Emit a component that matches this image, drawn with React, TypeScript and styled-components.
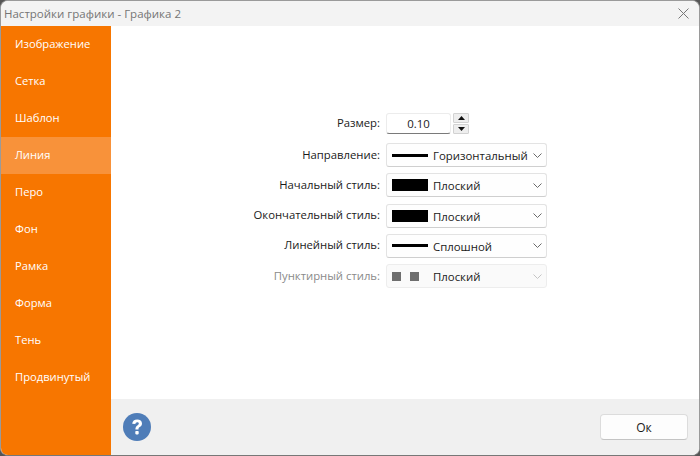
import React from "react";
import styled, { createGlobalStyle } from "styled-components";

const Global = createGlobalStyle`
  html, body { margin: 0; padding: 0; background: #555; overflow: hidden; }
  body { font-family: "Open Sans", "Noto Sans", sans-serif; }
`;

const Win = styled.div`
  width: 700px; height: 456px; box-sizing: border-box;
  display: flex; flex-direction: column; overflow: hidden;
  border: 1px solid #9a9a9a; border-bottom-color: #777; border-radius: 8px;
  background: #fff;
`;
const TitleBar = styled.div`
  height: 25px; box-sizing: border-box; flex: none; background: #f3f3f3; display: flex; align-items: center;
  justify-content: space-between; padding: 0 10px 1px 3px;
  font-size: 11.5px; color: #757575;
`;
const Body = styled.div`flex: 1; display: flex; min-height: 0;`;
const Side = styled.nav`width: 110px; flex: none; background: #f77600; display: flex; flex-direction: column;`;
const NavItem = styled.div<{ $active?: boolean }>`
  height: 37px; box-sizing: border-box; flex: none; display: flex; align-items: center; padding: 0 0 2px 14px;
  color: #fff; font-size: 11.2px; background: ${(p) => (p.$active ? "#f8923a" : "transparent")};
`;
const Main = styled.div`flex: 1; display: flex; flex-direction: column; min-width: 0;`;
const Content = styled.div`
  flex: 1; background: #fff; display: grid; grid-template-columns: 269px 161px; column-gap: 6px;
  grid-auto-rows: min-content; align-content: start; padding-top: 87px;
`;
const Label = styled.div<{ $off?: boolean; $h?: number; $mb?: number }>`
  height: ${(p) => p.$h ?? 24}px; box-sizing: border-box; padding-bottom: 2px; margin-bottom: ${(p) => p.$mb ?? 6.25}px; display: flex; align-items: center; justify-content: flex-end;
  font-size: 11.3px; color: ${(p) => (p.$off ? "#8a8a8a" : "#1a1a1a")}; white-space: nowrap;
`;
const SpinRow = styled.div`display: flex; gap: 1px; height: 21px; margin-bottom: 9px;`;
const SpinInput = styled.div`
  width: 65px; box-sizing: border-box; border: 1px solid #ececec; border-bottom: 1px solid #7a7a7a; border-radius: 3px;
  display: flex; align-items: center; justify-content: center; font-size: 11.4px; color: #1a1a1a; background: #fff;
`;
const SpinCol = styled.div`display: flex; flex-direction: column; justify-content: space-between; padding-left: 1px;`;
const SpinBtn = styled.div`
  width: 16px; height: 10px; box-sizing: border-box; background: #eee; border: 1px solid #d2d2d2; border-radius: 1px;
  display: flex; align-items: center; justify-content: center;
`;
const Combo = styled.div<{ $off?: boolean }>`
  height: 24px; box-sizing: border-box; margin-bottom: 6.25px; display: flex; align-items: center;
  border: 1px solid ${(p) => (p.$off ? "#ededed" : "#e3e3e3")}; border-bottom-color: ${(p) => (p.$off ? "#ededed" : "#cfcfcf")}; border-radius: 3px;
  background: ${(p) => (p.$off ? "#fafafa" : "#fefefe")}; padding: 0 4px 0 5px;
  font-size: 11.4px; color: #1a1a1a;
`;
const Swatch = styled.span`width: 36px; flex: none; margin-right: 5px; display: flex; align-items: center; justify-content: flex-start;`;
const Line = styled.span`display: block; width: 36px; height: 3px; background: #000;`;
const Block = styled.span`display: block; width: 36px; height: 12px; background: #000;`;
const Dot = styled.span`display: block; width: 9px; height: 9px; background: #6e6e6e; margin-right: 9px;`;
const ComboText = styled.span`flex: 1; white-space: nowrap; padding-top: 1px;`;
const Footer = styled.div`
  height: 56px; flex: none; background: #f0f0f0; display: flex; align-items: center; justify-content: space-between;
  padding: 0 11px 0 12px;
`;
const OkButton = styled.div`
  width: 88px; height: 26px; box-sizing: border-box; background: #fdfdfd; border: 1px solid #dcdcdc; border-bottom-color: #c4c4c4; border-radius: 4px;
  display: flex; align-items: center; justify-content: center; font-size: 12px; color: #1a1a1a;
`;

const Chevron = ({ off }: { off?: boolean }) => (
  <svg width="9" height="5" viewBox="0 0 9 5" fill="none">
    <path d="M0.5 0.5L4.5 4.5L8.5 0.5" stroke={off ? "#c4c4c4" : "#6a6a6a"} strokeWidth="1" />
  </svg>
);
const Tri = ({ up }: { up?: boolean }) => (
  <svg width="7" height="4" viewBox="0 0 7 4"><path d={up ? "M0 4L3.5 0L7 4Z" : "M0 0L3.5 4L7 0Z"} fill="#111" /></svg>
);

const nav = ["Изображение", "Сетка", "Шаблон", "Линия", "Перо", "Фон", "Рамка", "Форма", "Тень", "Продвинутый"];

const rows: { label: string; text: string; kind: "line" | "block" | "dots"; off?: boolean }[] = [
  { label: "Направление:", text: "Горизонтальный", kind: "line" },
  { label: "Начальный стиль:", text: "Плоский", kind: "block" },
  { label: "Окончательный стиль:", text: "Плоский", kind: "block" },
  { label: "Линейный стиль:", text: "Сплошной", kind: "line" },
  { label: "Пунктирный стиль:", text: "Плоский", kind: "dots", off: true },
];

export default function App() {
  return (
    <Win>
      <Global />
      <TitleBar>
        <span>Настройки графики - Графика 2</span>
        <svg width="11" height="11" viewBox="0 0 11 11" fill="none">
          <path d="M0.5 0.5L10.5 10.5M10.5 0.5L0.5 10.5" stroke="#777" strokeWidth="1" />
        </svg>
      </TitleBar>
      <Body>
        <Side>
          {nav.map((n) => (
            <NavItem key={n} $active={n === "Линия"}>{n}</NavItem>
          ))}
        </Side>
        <Main>
          <Content>
            <Label $h={21} $mb={9}>Размер:</Label>
            <SpinRow>
              <SpinInput>0.10</SpinInput>
              <SpinCol>
                <SpinBtn><Tri up /></SpinBtn>
                <SpinBtn><Tri /></SpinBtn>
              </SpinCol>
            </SpinRow>
            {rows.map((r) => (
              <React.Fragment key={r.label}>
                <Label $off={r.off}>{r.label}</Label>
                <Combo $off={r.off}>
                  <Swatch>
                    {r.kind === "line" && <Line />}
                    {r.kind === "block" && <Block />}
                    {r.kind === "dots" && (<><Dot /><Dot /></>)}
                  </Swatch>
                  <ComboText>{r.text}</ComboText>
                  <Chevron off={r.off} />
                </Combo>
              </React.Fragment>
            ))}
          </Content>
          <Footer>
            <svg width="28" height="28" viewBox="0 0 28 28">
              <circle cx="14" cy="14" r="14" fill="#4f7db8" />
              <path d="M9.2 10.8C9.4 7.9 11.4 6.4 14.2 6.4C17 6.4 19 8 19 10.4C19 12.2 18 13.1 16.7 14C15.6 14.8 15.5 15.2 15.5 16.4H12.4C12.4 14.4 12.9 13.4 14.3 12.4C15.3 11.7 15.8 11.3 15.8 10.5C15.8 9.7 15.2 9.2 14.2 9.2C13.1 9.2 12.5 9.9 12.4 11Z" fill="#fff" />
              <rect x="12.3" y="18" width="3.4" height="3.4" rx="0.8" fill="#fff" />
            </svg>
            <OkButton>Ок</OkButton>
          </Footer>
        </Main>
      </Body>
    </Win>
  );
}
